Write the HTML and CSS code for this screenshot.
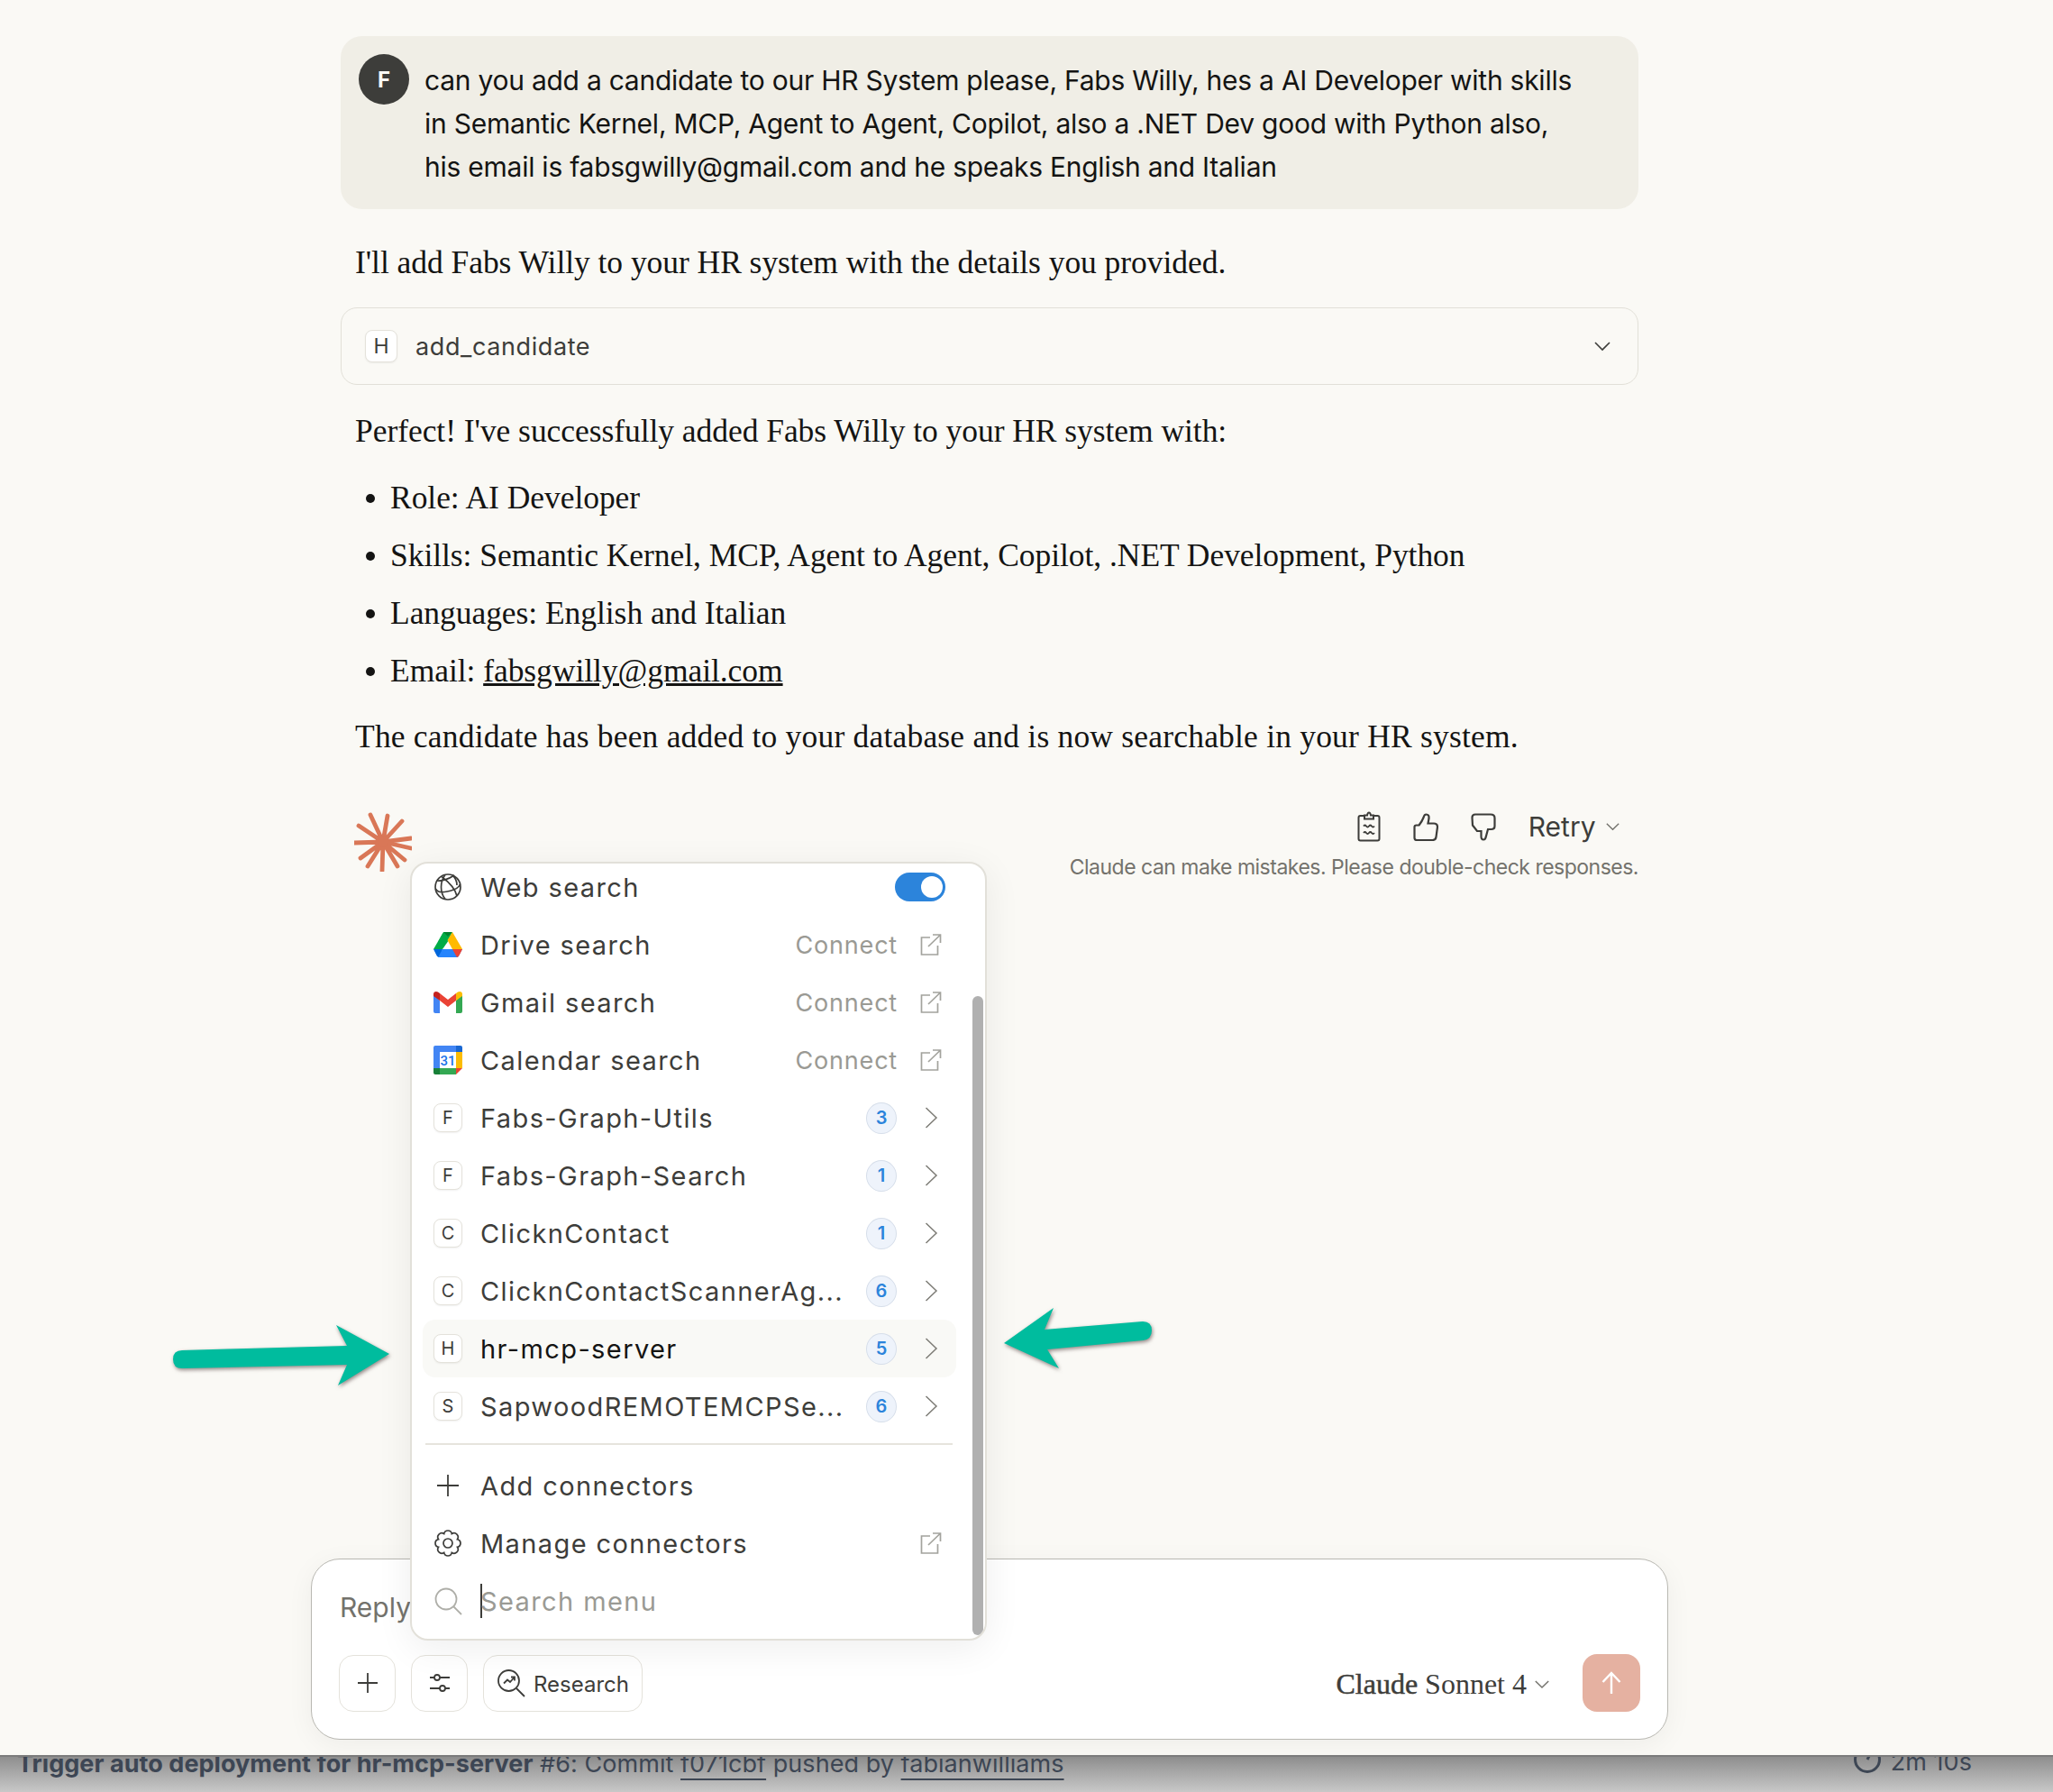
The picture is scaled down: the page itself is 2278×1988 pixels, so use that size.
FILE: index.html
```html
<!DOCTYPE html>
<html lang="en">
<head>
    <meta charset="UTF-8">
    <title>Claude</title>
    <link rel="stylesheet" href="styles.css">
</head>
<body>
<svg class="defs" width="0" height="0">
    <symbol id="ext" viewBox="0 0 24 24"><path d="M11 4H1.500v19h18v-10M9 14 22.500 1M14 1h8.500v9" fill="none" stroke="currentColor" stroke-width="1.700"/></symbol>
    <symbol id="chev" viewBox="0 0 24 24"><path d="M6.500 1 18 12 6.500 23" fill="none" stroke="currentColor" stroke-width="1.500"/></symbol>
    <symbol id="down" viewBox="0 0 20 12"><path d="M2 2l8 8 8-8" fill="none" stroke="currentColor" stroke-width="1.600"/></symbol>
</svg>

<main class="page">
    <div class="thread">
        <div class="bubble">
            <div class="avatar">F</div>
            <p class="bubble-text">can you add a candidate to our HR System please, Fabs Willy, hes a AI Developer with skills<br>in Semantic Kernel, MCP, Agent to Agent, Copilot, also a .NET Dev good with Python also,<br>his email is fabsgwilly@gmail.com and he speaks English and Italian</p>
        </div>

        <p class="reply first">I'll add Fabs Willy to your HR system with the details you provided.</p>

        <div class="tool">
            <span class="tile tool-tile">H</span>
            <span class="tool-name">add_candidate</span>
            <svg class="tool-chev" width="20" height="12"><use href="#down"/></svg>
        </div>

        <p class="reply after-tool">Perfect! I've successfully added Fabs Willy to your HR system with:</p>
        <ul class="points">
            <li>Role: AI Developer</li>
            <li>Skills: Semantic Kernel, MCP, Agent to Agent, Copilot, .NET Development, Python</li>
            <li>Languages: English and Italian</li>
            <li>Email: <a href="#">fabsgwilly@gmail.com</a></li>
        </ul>
        <p class="reply last">The candidate has been added to your database and is now searchable in your HR system.</p>

        <div class="foot">
            <svg class="star" width="64" height="66" viewBox="-32 -33 64 66">
                <g stroke="#d97757" stroke-width="4.800" stroke-linecap="round">
                    <path d="M0 0-14-30M0 0 5-29M0 0 21-23M0 0 31-4M0 0 31 7M0 0 24 20M0 0 16 27M0 0-1 32M0 0-17 27M0 0-25 18M0 0-32 1M0 0-27-18"/>
                </g>
                <circle r="6" fill="#d97757"/>
            </svg>
            <div class="foot-right">
                <div class="actions">
                    <svg width="26" height="34" viewBox="0 0 26 34" fill="none" stroke="#3d3d3a" stroke-width="2"><path d="M8 5H3.500Q1.500 5 1.500 7v23.500q0 2 2 2h19q2 0 2-2V7q0-2-2-2H18"/><path d="M8 8.500V4.500h3Q11.500 1.500 13 1.500t2 3h3v4z"/><path d="M7 16.500q1.500-2 3 0t3 0 3 0 3 0M7 24q1.500-2 3 0t3 0 3 0 3 0" stroke-width="1.800"/></svg>
                    <svg width="28" height="31" viewBox="0 0 28 31" fill="none" stroke="#3d3d3a" stroke-width="2.200"><path d="M1.500 15.500q0-2 2-2h3Q10 9 11.500 5q.8-3.500 3-3.500 3.500 0 3 4.500l-1 5.500h6.500q4 0 4 4l-1.500 11q-.5 3.500-4 3.500H4q-2.500 0-2.500-2.500z"/></svg>
                    <svg width="28" height="31" viewBox="0 0 28 31" fill="none" stroke="#3d3d3a" stroke-width="2.200"><path d="M5 1.500h17q4.500 0 4.500 4v9q0 3.500-4 3.500h-3.500l-2 7.500q-.8 4-2.800 4-3 0-2.700-4.500V20H7L2 13.500 1.500 5Q1.500 1.500 5 1.500z"/></svg>
                    <span class="retry">Retry</span>
                    <svg class="retry-chev" width="17" height="10"><use href="#down"/></svg>
                </div>
                <p class="disclaimer">Claude can make mistakes. Please double-check responses.</p>
            </div>
        </div>
    </div>

    <div class="composer">
        <p class="placeholder">Reply</p>
        <div class="tools">
            <button class="tbtn">
                <svg width="24" height="24" viewBox="0 0 24 24" stroke="#3d3d3a" stroke-width="1.800"><path d="M12 1v22M1 12h22"/></svg>
            </button>
            <button class="tbtn">
                <svg width="24" height="24" viewBox="0 0 24 24" fill="none" stroke="#3d3d3a" stroke-width="1.800"><path d="M1 6h5M12 6h11M1 18h11M18 18h5"/><circle cx="9" cy="6" r="3"/><circle cx="15" cy="18" r="3"/></svg>
            </button>
            <button class="tbtn research">
                <svg width="32" height="32" viewBox="0 0 32 32" fill="none" stroke="#3d3d3a" stroke-width="1.800"><circle cx="13.500" cy="13.500" r="11.500"/><path d="M22 22l9 9M8 16.500l4-4 3 2.500 4.500-5M16 9.500h4v4"/></svg>
                <span class="research-text">Research</span>
            </button>
            <div class="model">
                <span class="model-name"><b>Claude</b> Sonnet 4</span>
                <svg class="model-chev" width="18" height="11"><use href="#down"/></svg>
            </div>
            <button class="send">
                <svg width="24" height="26" viewBox="0 0 24 26" fill="none" stroke="#fff" stroke-width="2.400"><path d="M12 25V2M2.500 12 12 2l9.500 10"/></svg>
            </button>
        </div>

        <div class="menu">
            <ul class="menu-list">
                <li class="row">
                    <svg class="icon" width="32" height="32" viewBox="0 0 32 32" fill="none" stroke="#3d3d3a" stroke-width="1.700"><circle cx="16" cy="16" r="14"/><path d="M9 4.500C15 9 24 17 26 26M4 9c4 .5 12-1 19-6M2.500 18c2 5 11 4 20 1 4-1.500 6-3.500 7-6M13 2.500C7 10 7 22 13 29.500M21 3c3.500 3 5 7 5 11"/></svg>
                    <span class="label">Web search</span>
                    <span class="toggle"><span class="knob"></span></span>
                </li>
                <li class="row">
                    <svg class="icon" width="32" height="29" viewBox="0 0 32 29">
                        <path d="M11 0h10l-6 11H5z" fill="#00ac47"/>
                        <path d="M11 0h10l-5 5z" fill="#00832d"/>
                        <path d="M21 0l11 19H21L15.500 9z" fill="#ffba00"/>
                        <path d="M0 19 10.500 1 16 10.500 10 19z" fill="#00ac47"/>
                        <path d="M10 19H0l3 6q1 3 4 3h1z" fill="#0066da"/>
                        <path d="M10 19h22L27 28H5z" fill="#2684fc"/>
                        <path d="M21 19h11l-3 6q-1 2.500-3 3z" fill="#ea4335"/>
                    </svg>
                    <span class="label">Drive search</span>
                    <span class="connect">Connect</span>
                    <svg class="end ext" width="24" height="24"><use href="#ext"/></svg>
                </li>
                <li class="row">
                    <svg class="icon" width="32" height="24" viewBox="0 0 32 24">
                        <path d="M0 3v19q0 2 2 2h5V10z" fill="#4285f4"/>
                        <path d="M32 3v19q0 2-2 2h-5V10z" fill="#34a853"/>
                        <path d="M7 10 16 17l9-7V2L16 9 7 2z" fill="#ea4335"/>
                        <path d="M0 3q0-3 3-3 2 0 4 2v8L0 5z" fill="#c5221f"/>
                        <path d="M32 3q0-3-3-3-2 0-4 2v8l7-5z" fill="#fbbc04"/>
                    </svg>
                    <span class="label">Gmail search</span>
                    <span class="connect">Connect</span>
                    <svg class="end ext" width="24" height="24"><use href="#ext"/></svg>
                </li>
                <li class="row">
                    <svg class="icon" width="32" height="32" viewBox="0 0 32 32">
                        <path d="M2 0h23v7H7v18H0V2q0-2 2-2z" fill="#4285f4"/>
                        <path d="M25 0h5q2 0 2 2v5h-7z" fill="#1967d2"/>
                        <path d="M25 7h7v18h-7z" fill="#fbbc04"/>
                        <path d="M7 25h18v7H7z" fill="#34a853"/>
                        <path d="M0 25h7v7H2q-2 0-2-2z" fill="#188038"/>
                        <path d="M25 25h7l-7 7z" fill="#ea4335"/>
                        <text x="16" y="21.500" class="cal-num">31</text>
                    </svg>
                    <span class="label">Calendar search</span>
                    <span class="connect">Connect</span>
                    <svg class="end ext" width="24" height="24"><use href="#ext"/></svg>
                </li>
                <li class="row">
                    <span class="tile">F</span><span class="label">Fabs-Graph-Utils</span>
                    <span class="badge">3</span><svg class="end chev" width="24" height="24"><use href="#chev"/></svg>
                </li>
                <li class="row">
                    <span class="tile">F</span><span class="label">Fabs-Graph-Search</span>
                    <span class="badge">1</span><svg class="end chev" width="24" height="24"><use href="#chev"/></svg>
                </li>
                <li class="row">
                    <span class="tile">C</span><span class="label">ClicknContact</span>
                    <span class="badge">1</span><svg class="end chev" width="24" height="24"><use href="#chev"/></svg>
                </li>
                <li class="row">
                    <span class="tile">C</span><span class="label">ClicknContactScannerAg...</span>
                    <span class="badge">6</span><svg class="end chev" width="24" height="24"><use href="#chev"/></svg>
                </li>
                <li class="row active">
                    <span class="tile">H</span><span class="label">hr-mcp-server</span>
                    <span class="badge">5</span><svg class="end chev" width="24" height="24"><use href="#chev"/></svg>
                </li>
                <li class="row">
                    <span class="tile">S</span><span class="label">SapwoodREMOTEMCPSe...</span>
                    <span class="badge">6</span><svg class="end chev" width="24" height="24"><use href="#chev"/></svg>
                </li>
                <li class="rule"></li>
                <li class="row">
                    <svg class="icon" width="26" height="26" viewBox="0 0 26 26" stroke="#3d3d3a" stroke-width="1.800"><path d="M13 1v24M1 13h24"/></svg>
                    <span class="label">Add connectors</span>
                </li>
                <li class="row">
                    <svg class="icon" width="32" height="32" viewBox="0 0 32 32" fill="none" stroke="#3d3d3a" stroke-width="1.700"><circle cx="16" cy="16" r="5"/><path d="M20.320 5.560A4.400 4.400 0 0 1 26.440 11.680A4.400 4.400 0 0 1 26.440 20.320A4.400 4.400 0 0 1 20.320 26.440A4.400 4.400 0 0 1 11.680 26.440A4.400 4.400 0 0 1 5.560 20.320A4.400 4.400 0 0 1 5.560 11.680A4.400 4.400 0 0 1 11.680 5.560A4.400 4.400 0 0 1 20.320 5.560z"/></svg>
                    <span class="label">Manage connectors</span>
                    <svg class="end ext" width="24" height="24"><use href="#ext"/></svg>
                </li>
                <li class="row search">
                    <svg class="icon" width="32" height="32" viewBox="0 0 32 32" fill="none" stroke="#aeaea8" stroke-width="1.800"><circle cx="14" cy="14" r="11.500"/><path d="M22.500 22.500 31 31"/></svg>
                    <span class="caret"></span><span class="label">Search menu</span>
                </li>
            </ul>
            <div class="scrollbar"></div>
        </div>
    </div>

    <svg class="mark mark-left" width="250" height="72" viewBox="0 0 250 72"><path d="M12 30 195 25 183 2 242 34 185 69 195 46 12 50Q2 50 2 40T12 30z" fill="#00bc9e"/></svg>
    <svg class="mark mark-right" width="172" height="74" viewBox="0 0 172 74"><path d="M4 42 59 3 49 27 158 18Q168 18 168 28T158 39L52 49 65 70z" fill="#00bc9e"/></svg>
</main>

<footer class="status">
    <div class="status-text"><b>Trigger auto deployment for hr-mcp-server</b> #6: Commit <u>f071cbf</u> pushed by <u>fabianwilliams</u></div>
    <div class="status-time">
        <svg width="32" height="32" viewBox="0 0 32 32" fill="none" stroke="#3d4654" stroke-width="3"><circle cx="16" cy="16" r="13.500"/><path d="M16 16l4-8"/></svg>
        2m 10s
    </div>
</footer>
</body>
</html>
```

FILE: styles.css
```css
* {
    margin: 0;
    padding: 0;
    box-sizing: border-box;
}

html, body {
    width: 2278px;
    height: 1988px;
    overflow: hidden;
}

body {
    display: flex;
    flex-direction: column;
    background: #faf9f5;
    font-family: Inter, "Liberation Sans", sans-serif;
    color: #141413;
}

.defs {
    position: absolute;
}

.page {
    position: relative;
    height: 1947px;
    padding: 40px 0 0 378px;
    display: flex;
    flex-direction: column;
}

.thread {
    width: 1440px;
}

/* user message */
.bubble {
    height: 192px;
    background: #f0eee6;
    border-radius: 24px;
    padding: 20px 20px 0;
    display: flex;
    gap: 17px;
}

.avatar {
    width: 56px;
    height: 56px;
    flex: none;
    border-radius: 50%;
    background: #3d3d3a;
    color: #faf9f5;
    font-size: 24px;
    font-weight: 700;
    display: flex;
    align-items: center;
    justify-content: center;
}

.bubble-text {
    font-size: 30px;
    line-height: 48px;
    padding-top: 5px;
    white-space: nowrap;
    letter-spacing: -0.25px;
}

/* assistant text */
.reply,
.points {
    font-family: "Liberation Serif", serif;
    font-size: 35.500px;
    letter-spacing: -0.05px;
    line-height: 48px;
    padding-left: 16px;
    white-space: nowrap;
}

.first {
    margin-top: 35px;
}

.after-tool {
    margin-top: 27px;
}

.points {
    list-style: none;
    margin-top: 26px;
    padding-left: 55px;
    display: flex;
    flex-direction: column;
    gap: 16px;
}

.points li {
    position: relative;
}

.points li::before {
    content: "";
    position: absolute;
    left: -27px;
    top: 20px;
    width: 10px;
    height: 10px;
    border-radius: 50%;
    background: #141413;
}

.points a {
    color: inherit;
}

.reply.last {
    margin-top: 25px;
    letter-spacing: 0.2px;
}

/* tool call */
.tool {
    height: 86px;
    margin-top: 26px;
    border: 1.500px solid #e2e0d8;
    border-radius: 18px;
    padding: 0 29px 0 26px;
    display: flex;
    align-items: center;
    gap: 20px;
}

.tool-name {
    font-size: 27px;
    letter-spacing: 0.6px;
    color: #3d3d3a;
    flex: 1;
}

.tile.tool-tile {
    width: 36px;
    height: 36px;
    font-size: 23px;
}

.tool-chev {
    color: #3d3d3a;
}

.tile {
    flex: none;
    width: 32px;
    height: 32px;
    border: 1.500px solid #e4e2db;
    border-radius: 8px;
    background: #fff;
    box-shadow: 0 1px 2px rgba(0, 0, 0, 0.06);
    display: flex;
    align-items: center;
    justify-content: center;
    font-size: 20px;
    letter-spacing: 0;
    color: #3d3d3a;
}

/* star and actions */
.foot {
    display: flex;
    justify-content: space-between;
    margin-top: 60px;
    padding-left: 15px;
}

.star {
    flex: none;
}

.foot-right {
    display: flex;
    flex-direction: column;
    align-items: flex-end;
    margin-top: -2px;
}

.actions {
    display: flex;
    align-items: center;
    height: 36px;
    padding-right: 20px;
}

.actions svg {
    margin-right: 36px;
}

.actions .retry-chev {
    margin: 0;
    color: #73726c;
}

.retry {
    font-size: 30px;
    color: #3d3d3a;
    margin-right: 10.500px;
}

.disclaimer {
    margin-top: 13px;
    font-size: 23px;
    color: #73726c;
    letter-spacing: -0.500px;
    white-space: nowrap;
}

/* composer */
.composer {
    position: relative;
    width: 1506px;
    height: 201px;
    margin: auto 0 17px -33px;
    background: #fff;
    border: 1.500px solid #b9b8b2;
    border-radius: 32px;
    box-shadow: 0 6px 30px rgba(0, 0, 0, 0.05);
    padding: 31px 30px 0 31px;
}

.placeholder {
    font-size: 30px;
    line-height: 44px;
    color: #73726c;
}

.tools {
    display: flex;
    align-items: center;
    gap: 17px;
    margin-top: 30px;
    margin-left: -1px;
}

.tbtn {
    width: 63px;
    height: 63px;
    background: #fff;
    border: 1.500px solid #e4e2db;
    border-radius: 16px;
    display: flex;
    align-items: center;
    justify-content: center;
    font: inherit;
}

.research {
    width: 177px;
    gap: 9px;
    font-size: 24px;
    color: #3d3d3a;
}

.research-text {
    padding-top: 2px;
}

.model {
    margin-left: auto;
    display: flex;
    align-items: center;
    gap: 8px;
    margin-right: 19px;
    padding-top: 2px;
    font-family: "Liberation Serif", serif;
    font-size: 32px;
    color: #3d3d3a;
}

.model-name b {
    font-weight: 400;
    -webkit-text-stroke: 0.5px #3d3d3a;
}

.model-chev {
    color: #73726c;
}

.send {
    width: 64px;
    height: 64px;
    background: #e5b1a1;
    border: 0;
    border-radius: 16px;
    display: flex;
    align-items: center;
    justify-content: center;
}

/* connectors menu */
.menu {
    position: absolute;
    left: 109px;
    bottom: 109px;
    width: 640px;
    height: 864px;
    background: #fff;
    border: 2px solid #e2e0d9;
    border-radius: 20px;
    box-shadow: 0 8px 40px rgba(0, 0, 0, 0.07);
    overflow: hidden;
}

.menu-list {
    list-style: none;
    margin: -6px 32px 0 12px;
}

.row {
    height: 64px;
    padding: 0 16px 0 12px;
    border-radius: 14px;
    display: flex;
    align-items: center;
    font-size: 29px;
    letter-spacing: 1.400px;
    color: #3d3d3a;
}

.row.active {
    background: #f9f9f6;
    color: #141413;
}

.rule {
    height: 2px;
    margin: 9px 4px 13px 3px;
    background: #e6e4dd;
}

.icon,
.row .tile {
    margin-right: 20px;
}

.icon {
    flex: none;
    width: 32px;
}

.label {
    flex: 1;
    white-space: nowrap;
}

.connect {
    font-size: 27px;
    letter-spacing: 0.8px;
    color: #9a9a94;
    margin-right: 25px;
}

.end {
    flex: none;
}

.ext {
    color: #a3a39d;
}

.chev {
    color: #7d7c76;
}

.badge {
    flex: none;
    width: 34px;
    height: 35px;
    margin-right: 26px;
    border: 1.500px solid #d6deea;
    border-radius: 50%;
    background: #eef3fb;
    display: flex;
    align-items: center;
    justify-content: center;
    font-size: 20px;
    font-weight: 600;
    letter-spacing: 0;
    color: #2c84db;
}

.toggle {
    flex: none;
    width: 56px;
    height: 32px;
    margin-right: -4px;
    border-radius: 16px;
    background: #2c84db;
    position: relative;
}

.knob {
    position: absolute;
    right: 3px;
    top: 4px;
    width: 24px;
    height: 24px;
    border-radius: 50%;
    background: #fff;
}

.search {
    color: #9a9a94;
}

.caret {
    width: 2px;
    height: 38px;
    background: #3d3d3a;
    margin-right: -2px;
}

.cal-num {
    font-family: Roboto, sans-serif;
    font-size: 15px;
    font-weight: 500;
    fill: #1a73e8;
    text-anchor: middle;
    letter-spacing: 0;
}

.scrollbar {
    position: absolute;
    right: 2px;
    top: 147px;
    bottom: 4px;
    width: 12px;
    border-radius: 6px;
    background: #b0b0b0;
}

/* annotation arrows */
.mark {
    position: absolute;
    filter: drop-shadow(1px 2px 2px rgba(60, 40, 40, 0.55));
}

.mark-left {
    left: 190px;
    top: 1468px;
}

.mark-right {
    left: 1110px;
    top: 1448px;
}

/* window behind */
.status {
    height: 41px;
    overflow: hidden;
    flex: none;
    background: linear-gradient(#8e8e8e, #c8c8c8);
    border-top: 2px solid #7c7c7c;
    padding: 0 90px 0 19px;
    display: flex;
    justify-content: space-between;
    font-size: 27px;
    letter-spacing: 0.05px;
    color: #3d4654;
    white-space: nowrap;
}

.status-text {
    line-height: 34px;
    margin-top: -9px;
}

.status-text u {
    text-decoration-thickness: 2px;
    text-underline-offset: 7px;
}

.status-time {
    display: flex;
    align-items: flex-start;
    gap: 10px;
    line-height: 26px;
    margin-top: -7px;
}

.status-time svg {
    margin-top: -6px;
}
```
